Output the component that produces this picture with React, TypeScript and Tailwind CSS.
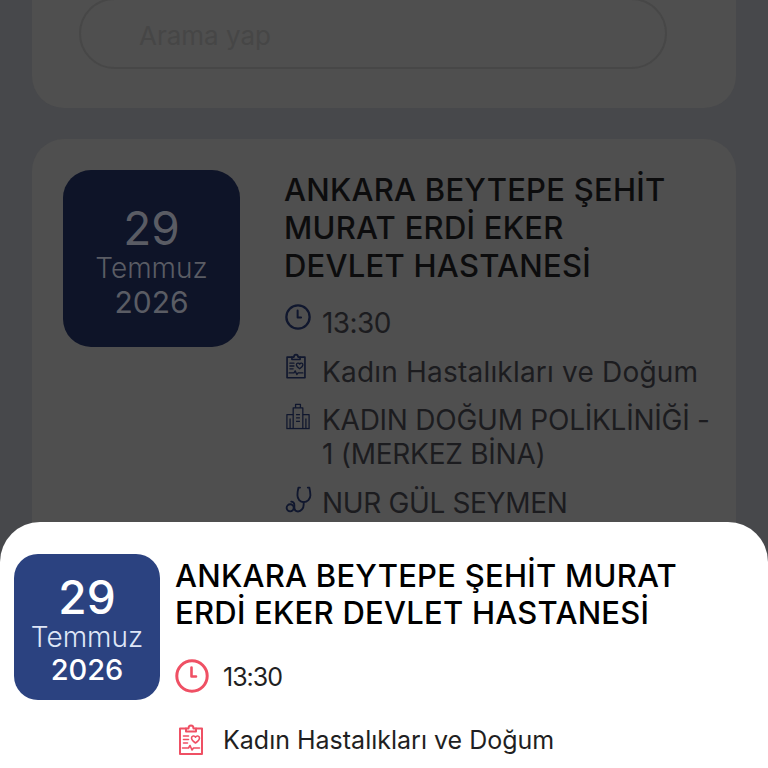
const FONT = "font-['Inter','Liberation_Sans',sans-serif]";

function ClockIcon({ className }: { className: string }) {
  return (
    <svg viewBox="0 0 34 34" fill="none" stroke="currentColor" strokeWidth="3" strokeLinecap="round" strokeLinejoin="round" className={className}>
      <circle cx="17" cy="17" r="15.2" />
      <path d="M16.500 8.500v9h4.500" strokeWidth="2.600" />
    </svg>
  );
}

function ClipboardIcon({ className }: { className: string }) {
  return (
    <svg viewBox="0 0 26 32" fill="none" stroke="currentColor" strokeWidth="2" strokeLinejoin="round" strokeLinecap="round" className={className}>
      <path d="M8 5H2v25.500h22V5h-6" />
      <path d="M8 8V5h2.500c0-4 5-4 5 0H18v3z" />
      <path d="M5.500 12.500h5M5.500 16h5M5.500 19.500h4" strokeWidth="1.600" />
      <path d="M17.500 19.500c-2.500-1.800-4-3.200-4-5 0-2.200 3-2.800 4-.8 1-2 4-1.400 4 .8 0 1.800-1.500 3.200-4 5z" strokeWidth="1.600" />
      <path d="M4.500 24.500h6l1.500-2.500 2 4.500 1.500-2h6" strokeWidth="1.600" />
    </svg>
  );
}

function BuildingIcon({ className }: { className: string }) {
  return (
    <svg viewBox="0 0 26 28" fill="none" stroke="currentColor" strokeWidth="1.300" strokeLinejoin="round" className={className}>
      <path d="M1 26.500h24" />
      <path d="M8 26.500V5h10v21.500" />
      <path d="M10.500 5V1.500h5V5" />
      <path d="M8 12H1.500v14.500M18 12h6.500v14.500" />
      <path d="M11 12h4M11 15.500h4M11 19h4" />
      <path d="M4.800 16v10.500M21.200 16v10.500" />
    </svg>
  );
}

function StethoscopeIcon({ className }: { className: string }) {
  return (
    <svg viewBox="0 0 27 27" fill="none" stroke="currentColor" strokeWidth="1.800" strokeLinecap="round" strokeLinejoin="round" className={className}>
      <path d="M14.500 2.500h-1.500c-.8 3-1 5.500-1 7.500 0 3.500 2.500 6.500 6 6.500s6.500-3 6.500-6.500c0-2-.4-4.500-1-7.500h-1.500" />
      <path d="M18 16.500v2.500c0 3.500-2.500 6.500-5.500 6.500-2.500 0-3.500-1.800-3.500-4v-2c0-2.500-1.500-3.500-3-3.500" />
      <circle cx="5" cy="22" r="3.400" />
    </svg>
  );
}

function InfoRow({ icon, children, className = '' }: { icon: React.ReactNode; children: React.ReactNode; className?: string }) {
  return (
    <div className={`flex items-start ${className}`}>
      <div className="w-[37px] shrink-0 text-[#10172e]">{icon}</div>
      <div className="whitespace-nowrap text-[28px] leading-[34px] tracking-[0.2px] text-[#1c1c1f]">{children}</div>
    </div>
  );
}

export default function App() {
  return (
    <div className={`relative h-[768px] w-[768px] overflow-hidden bg-[#47484b] ${FONT}`}>
      <div className="mx-8 -mt-[30px] h-[138px] rounded-b-[32px] bg-[#4f4f4f] pl-[47px] pr-[69px] pt-[28px]">
        <div className="flex h-[71px] items-center rounded-[36px] border-2 border-[#474747] pl-[58px] pt-[4px] text-[26px] text-[#464646]">
          Arama yap
        </div>
      </div>

      <div className="mx-8 mt-[31px] flex h-[500px] gap-[45px] rounded-[32px] bg-[#4f4f4f] p-[31px]">
        <div className="flex h-[177px] w-[177px] shrink-0 flex-col items-center justify-center rounded-[28px] bg-[#0e1428] pt-[7px] text-[#5a5c64]">
          <span className="text-[46px] leading-[52px]">29</span>
          <span className="text-[28px] font-light leading-[28px]">Temmuz</span>
          <span className="text-[30px] leading-[40px]">2026</span>
        </div>
        <div className="min-w-0 flex-1">
          <h2 className="mt-[1px] -ml-[1px] text-[31px] font-medium leading-[38px] tracking-[0.25px] text-[#0c0c0d]">
            ANKARA BEYTEPE ŞEHİT<br />MURAT ERDİ EKER<br />DEVLET HASTANESİ
          </h2>
          <InfoRow className="mt-[21px]" icon={<ClockIcon className="-mt-[2px] h-[26px] w-[26px]" />}>
            <span className="tracking-[-0.6px]">13:30</span>
          </InfoRow>
          <InfoRow className="mt-[15px]" icon={<ClipboardIcon className="-mt-[2px] h-[26px] w-[22px]" />}>Kadın Hastalıkları ve Doğum</InfoRow>
          <InfoRow className="mt-[14px]" icon={<BuildingIcon className="h-[27px] w-[26px]" />}>
            <span className="tracking-[-0.25px]">KADIN DOĞUM POLİKLİNİĞİ -<br />1 (MERKEZ BİNA)</span>
          </InfoRow>
          <InfoRow className="mt-[15px]" icon={<StethoscopeIcon className="-mt-[1px] h-[28px] w-[28px]" />}>
            <span className="tracking-[-0.35px]">NUR GÜL SEYMEN</span>
          </InfoRow>
        </div>
      </div>

      <div className="absolute inset-x-0 bottom-0 flex h-[246px] gap-[15px] rounded-t-[40px] bg-white px-[14px] pt-[32px]">
        <div className="flex h-[146px] w-[146px] shrink-0 flex-col items-center justify-center rounded-[24px] bg-[#2b4280] pt-[6px] text-white">
          <span className="text-[46px] font-medium leading-[52px]">29</span>
          <span className="text-[28px] font-light leading-[28px] text-[#dfe6f7]">Temmuz</span>
          <span className="text-[29px] font-medium leading-[38px]">2026</span>
        </div>
        <div className="min-w-0 flex-1">
          <h2 className="mt-[3px] text-[31px] font-medium leading-[37px] tracking-[0.25px] text-black">
            ANKARA BEYTEPE ŞEHİT MURAT<br />ERDİ EKER DEVLET HASTANESİ
          </h2>
          <div className="mt-[28px] flex h-[34px] items-center gap-[14px]">
            <ClockIcon className="h-[34px] w-[34px] shrink-0 text-[#ef5064]" />
            <span className="pt-[4px] text-[25px] tracking-[-1px] text-[#1f1f22]">13:30</span>
          </div>
          <div className="mt-[29px] flex h-[34px] items-center gap-[19px]">
            <ClipboardIcon className="ml-[3px] h-[33px] w-[26px] shrink-0 text-[#ef5064]" />
            <span className="pt-[4px] text-[25px] text-[#1f1f22]">Kadın Hastalıkları ve Doğum</span>
          </div>
        </div>
      </div>
    </div>
  );
}
